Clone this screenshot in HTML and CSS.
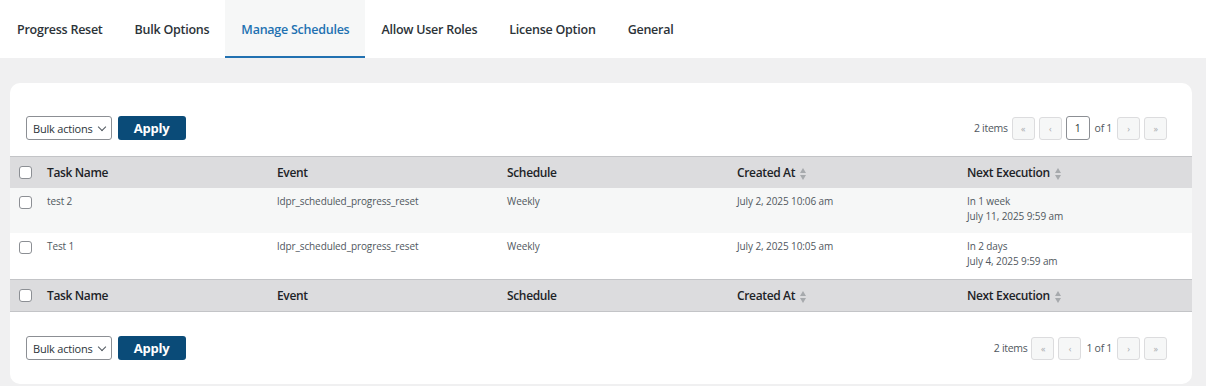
FILE: index.html
```html
<!DOCTYPE html>
<html lang="en">
<head>
    <meta charset="UTF-8">
    <title>Manage Schedules</title>
    <link rel="stylesheet" href="styles.css">
</head>
<body>
    <nav class="tabs">
        <a class="tab">Progress Reset</a>
        <a class="tab">Bulk Options</a>
        <a class="tab active">Manage Schedules</a>
        <a class="tab">Allow User Roles</a>
        <a class="tab">License Option</a>
        <a class="tab">General</a>
    </nav>

    <main class="page">
        <section class="card">
            <div class="tablenav top">
                <div class="bulk">
                    <div class="select">Bulk actions <span class="chev"></span></div>
                    <button class="apply">Apply</button>
                </div>
                <div class="pager">
                    <span class="count">2 items</span>
                    <span class="pbtn">&laquo;</span>
                    <span class="pbtn">&lsaquo;</span>
                    <span class="pinput">1</span>
                    <span class="of">of 1</span>
                    <span class="pbtn">&rsaquo;</span>
                    <span class="pbtn">&raquo;</span>
                </div>
            </div>

            <table class="list">
                <thead>
                    <tr>
                        <th class="cb"><span class="box"></span></th>
                        <th>Task Name</th>
                        <th>Event</th>
                        <th>Schedule</th>
                        <th>Created At <span class="sort"></span></th>
                        <th class="last">Next Execution <span class="sort"></span></th>
                    </tr>
                </thead>
                <tbody>
                    <tr class="alt">
                        <td class="cb"><span class="box"></span></td>
                        <td>test 2</td>
                        <td>ldpr_scheduled_progress_reset</td>
                        <td>Weekly</td>
                        <td>July 2, 2025 10:06 am</td>
                        <td class="last">In 1 week<br>July 11, 2025 9:59 am</td>
                    </tr>
                    <tr>
                        <td class="cb"><span class="box"></span></td>
                        <td>Test 1</td>
                        <td>ldpr_scheduled_progress_reset</td>
                        <td>Weekly</td>
                        <td>July 2, 2025 10:05 am</td>
                        <td class="last">In 2 days<br>July 4, 2025 9:59 am</td>
                    </tr>
                </tbody>
                <tfoot>
                    <tr>
                        <th class="cb"><span class="box"></span></th>
                        <th>Task Name</th>
                        <th>Event</th>
                        <th>Schedule</th>
                        <th>Created At <span class="sort"></span></th>
                        <th class="last">Next Execution <span class="sort"></span></th>
                    </tr>
                </tfoot>
            </table>

            <div class="tablenav bottom">
                <div class="bulk">
                    <div class="select">Bulk actions <span class="chev"></span></div>
                    <button class="apply">Apply</button>
                </div>
                <div class="pager">
                    <span class="count">2 items</span>
                    <span class="pbtn">&laquo;</span>
                    <span class="pbtn">&lsaquo;</span>
                    <span class="of">1 of 1</span>
                    <span class="pbtn">&rsaquo;</span>
                    <span class="pbtn">&raquo;</span>
                </div>
            </div>
        </section>
    </main>
</body>
</html>
```

FILE: styles.css
```css
* {
    margin: 0;
    padding: 0;
    box-sizing: border-box;
}

html, body {
    width: 100%;
    height: 100%;
    overflow: hidden;
    background: #f0f0f1;
    font-family: "Open Sans", "Noto Sans", sans-serif;
    color: #1d2327;
}

.tabs {
    display: flex;
    height: 58px;
    padding-left: 1px;
    background: #fff;
}

.tab {
    display: flex;
    align-items: center;
    padding: 2px 16px 0;
    font-size: 12.5px;
    font-weight: 600;
    color: #2c3338;
    letter-spacing: -0.25px;
    border-bottom: 2px solid transparent;
}

.tab.active {
    color: #2271b1;
    background: #f6f7f7;
    border-bottom-color: #2271b1;
}

.page {
    padding: 25px 14px 0 10px;
}

.card {
    background: #fff;
    border-radius: 10px;
    height: 301px;
}

.tablenav {
    display: flex;
    justify-content: space-between;
    align-items: center;
    padding: 0 25px 0 16px;
}

.tablenav.top {
    padding-top: 33px;
    padding-bottom: 16px;
}

.tablenav.bottom {
    padding-top: 24px;
}

.bulk {
    display: flex;
    gap: 6px;
}

.select {
    display: flex;
    align-items: center;
    gap: 5px;
    height: 24px;
    padding: 0 5px 0 6px;
    border: 1px solid #8c8f94;
    border-radius: 3px;
    font-size: 11px;
    letter-spacing: -0.2px;
    color: #2c3338;
}

.chev {
    width: 6px;
    height: 6px;
    border-right: 1px solid #50575e;
    border-bottom: 1px solid #50575e;
    transform: rotate(45deg);
    margin: -3px 1px 0 1px;
}

.apply {
    height: 24px;
    width: 68px;
    border: none;
    border-radius: 3px;
    background: #0a4b78;
    color: #fff;
    font-family: inherit;
    font-size: 13px;
    font-weight: 700;
    letter-spacing: -0.2px;
}

.pager {
    display: flex;
    align-items: center;
    gap: 4px;
    font-size: 10.5px;
    letter-spacing: -0.3px;
    color: #50575e;
}

.pbtn {
    display: flex;
    align-items: center;
    justify-content: center;
    width: 23px;
    height: 23px;
    border: 1px solid #dcdcde;
    border-radius: 3px;
    background: #f6f7f7;
    color: #a7aaad;
    font-size: 9px;
}

.pinput {
    display: flex;
    align-items: center;
    justify-content: center;
    width: 24px;
    height: 24px;
    border: 1px solid #8c8f94;
    border-radius: 3px;
    color: #2c3338;
}

.of {
    margin: 0 1px;
}

.list {
    width: 100%;
    border-collapse: collapse;
    table-layout: fixed;
}

.list th, .list td {
    width: 230px;
    text-align: left;
    padding: 0 8px;
}

.list .last {
    width: auto;
}

.list th.cb, .list td.cb {
    width: 29px;
    padding: 0 0 0 9px;
}

.list thead th, .list tfoot th {
    height: 31px;
    background: #dcdcde;
    font-size: 12px;
    font-weight: 600;
    letter-spacing: -0.35px;
    color: #1d2327;
    border-top: 1px solid #c3c4c7;
}

.list tfoot th {
    height: 32px;
    border-bottom: 1px solid #c3c4c7;
}

.list td {
    height: 45px;
    vertical-align: top;
    padding-top: 6px;
    font-size: 10px;
    letter-spacing: -0.1px;
    line-height: 15px;
    color: #50575e;
}

.list tbody tr + tr td {
    height: 47px;
}

.list tr.alt td {
    background: #f6f7f7;
}

.list td.cb {
    padding-top: 8px;
}

.box {
    display: block;
    width: 13px;
    height: 13px;
    border: 1px solid #8c8f94;
    border-radius: 3px;
    background: #fff;
}

.sort {
    display: inline-block;
    vertical-align: middle;
    width: 7px;
    height: 12px;
    margin-left: 2px;
    position: relative;
}

.sort::before, .sort::after {
    content: "";
    position: absolute;
    left: 0;
    border-left: 3.5px solid transparent;
    border-right: 3.5px solid transparent;
}

.sort::before {
    top: 0;
    border-bottom: 5px solid #a7aaad;
}

.sort::after {
    bottom: 0;
    border-top: 5px solid #a7aaad;
}
```
